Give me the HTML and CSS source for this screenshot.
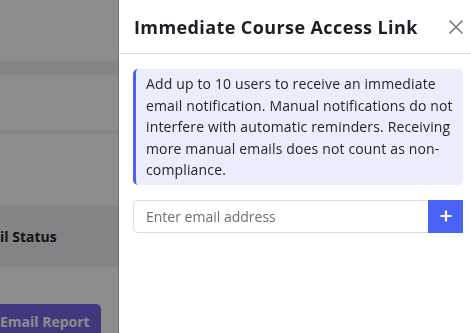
FILE: index.html
```html
<!DOCTYPE html>
<html lang="en">
<head>
    <meta charset="UTF-8">
    <meta name="viewport" content="width=device-width, initial-scale=1.0">
    <title>Immediate Course Access Link</title>
    <link rel="stylesheet" href="styles.css">
</head>
<body>
    <div class="page">
        <div class="topbar"></div>
        <div class="tabs"></div>
        <div class="filters"></div>
        <div class="spacer"></div>
        <div class="table-head">
            <span class="th">Email Status</span>
        </div>
        <div class="actions">
            <button class="report-btn">Email Report</button>
        </div>
    </div>

    <div class="overlay"></div>

    <aside class="drawer">
        <header class="drawer-header">
            <h2>Immediate Course Access Link</h2>
            <button class="close-btn" aria-label="Close">
                <svg width="16" height="16" viewBox="0 0 16 16">
                    <path d="M1.5 1.5 L14.5 14.5 M14.5 1.5 L1.5 14.5" stroke="#7a7a7a" stroke-width="1.6" fill="none"/>
                </svg>
            </button>
        </header>
        <div class="drawer-body">
            <p class="notice">Add up to 10 users to receive an immediate email notification. Manual notifications do not interfere with automatic reminders. Receiving more manual emails does not count as non-compliance.</p>
            <div class="email-row">
                <input type="text" placeholder="Enter email address">
                <button class="add-btn" aria-label="Add">
                    <svg width="14" height="14" viewBox="0 0 14 14">
                        <path d="M7 1.5 V12.5 M1.5 7 H12.5" stroke="#fff" stroke-width="2.2" fill="none"/>
                    </svg>
                </button>
            </div>
        </div>
    </aside>
</body>
</html>
```

FILE: styles.css
```css
body {
    margin: 0;
    font-family: "Open Sans", "Noto Sans", sans-serif;
    color: #1f2430;
    background-color: #fff;
    overflow: hidden;
}
.page {
    width: 118px;
    height: 333px;
    overflow: hidden;
}
.topbar {
    height: 61px;
}
.tabs {
    height: 14px;
    background-color: #f1f2f5;
}
.filters {
    height: 55px;
    border-bottom: 4px solid #f1f2f5;
}
.spacer {
    height: 72px;
}
.table-head {
    height: 61px;
    background-color: #f0f1f5;
    display: flex;
    align-items: center;
    white-space: nowrap;
}
.th {
    margin-left: -30px;
    font-size: 14px;
    font-weight: 700;
    color: #1e1e24;
}
.actions {
    padding-top: 37px;
    white-space: nowrap;
}
.report-btn {
    margin-left: -12px;
    height: 34px;
    padding: 0 11px 0 12px;
    border: none;
    border-radius: 5px;
    background-color: #7167e6;
    color: #fff;
    font-family: inherit;
    font-size: 14px;
    font-weight: 700;
}
.overlay {
    position: fixed;
    inset: 0;
    background-color: rgba(0, 0, 0, 0.45);
}
.drawer {
    position: fixed;
    top: 0;
    right: 0;
    bottom: 0;
    width: 352px;
    background-color: #fff;
    box-shadow: -1px 0 0 rgba(0, 0, 0, 0.2);
}
.drawer-header {
    height: 53px;
    display: flex;
    align-items: center;
    justify-content: space-between;
    padding: 0 7px 0 15px;
    border-bottom: 1px solid #dcdde3;
}
.drawer-header h2 {
    margin: 0;
    font-size: 18px;
    font-weight: 700;
    letter-spacing: 0.4px;
    color: #1d1f26;
}
.close-btn {
    border: none;
    background: none;
    padding: 0;
    width: 16px;
    height: 16px;
    cursor: pointer;
}
.drawer-body {
    padding: 15px 8px 0 14px;
}
.notice {
    margin: 0;
    padding: 4px 6px 4px 10px;
    border-left: 3px solid #4a62f5;
    border-radius: 5px;
    background-color: #ebedfc;
    font-size: 14px;
    letter-spacing: 0.15px;
    line-height: 21.6px;
    color: #23252c;
}
.email-row {
    display: flex;
    margin-top: 15px;
    height: 33px;
}
.email-row input {
    flex: 1;
    min-width: 0;
    border: 1px solid #dcdde3;
    border-right: none;
    border-radius: 5px 0 0 5px;
    padding: 0 12px;
    font-family: inherit;
    font-size: 14px;
    color: #333;
    outline: none;
}
.email-row input::placeholder {
    color: #6e6e74;
}
.add-btn {
    width: 35px;
    border: none;
    background-color: #4a62f5;
    display: flex;
    align-items: center;
    justify-content: center;
    cursor: pointer;
}
```
